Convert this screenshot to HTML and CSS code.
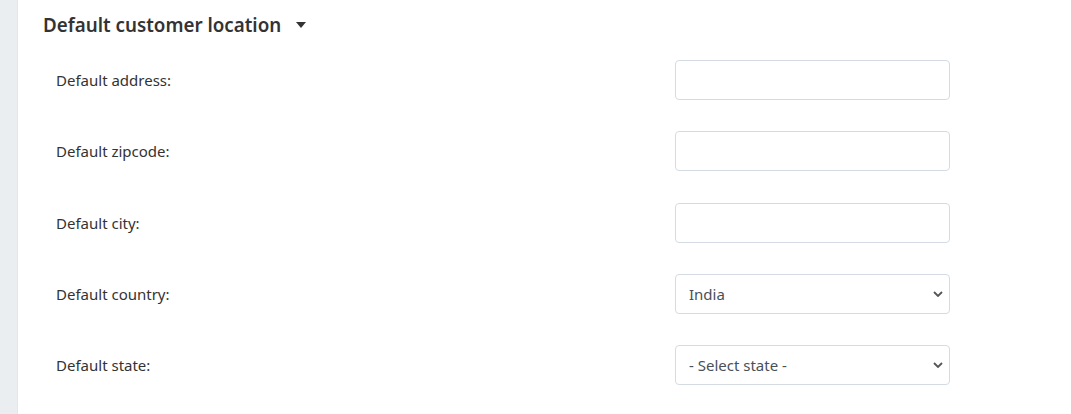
FILE: index.html
```html
<!DOCTYPE html>
<html lang="en">
<head>
  <meta charset="UTF-8" />
  <title>Default customer location</title>
  <link rel="stylesheet" href="styles.css">
</head>
<body>
  <div class="page">
    <div class="sidebar"></div>
    <div class="panel">
      <h2 class="section-title">
        Default customer location
        <svg class="caret" width="10" height="6" viewBox="0 0 10 6"><path d="M0 0h10L5 6z" fill="#333"/></svg>
      </h2>

      <div class="form-grid">
        <label for="address">Default address:</label>
        <input id="address" class="field" type="text">

        <label for="zipcode">Default zipcode:</label>
        <input id="zipcode" class="field" type="text">

        <label for="city">Default city:</label>
        <input id="city" class="field" type="text">

        <label for="country">Default country:</label>
        <select id="country" class="field select">
          <option>India</option>
        </select>

        <label for="state">Default state:</label>
        <select id="state" class="field select">
          <option>- Select state -</option>
        </select>
      </div>
    </div>
  </div>
</body>
</html>
```

FILE: styles.css
```css
* {
  margin: 0;
  padding: 0;
  box-sizing: border-box;
}

body, html {
  width: 100%;
  height: 100%;
  overflow: hidden;
  font-family: 'Noto Sans', 'Open Sans', sans-serif;
  background-color: #fff;
  color: #333;
}

.page {
  display: flex;
  height: 100%;
}

.sidebar {
  width: 18px;
  background-color: #ebeef1;
  border-right: 1px solid #e3e7ec;
}

.panel {
  flex: 1;
  padding: 11px 0 0 25px;
}

.section-title {
  display: flex;
  align-items: center;
  gap: 15px;
  font-size: 18.8px;
  font-weight: 600;
  line-height: 28px;
  color: #333;
}

.form-grid {
  display: grid;
  grid-template-columns: 619px 275px;
  row-gap: 31.25px;
  align-items: center;
  margin-top: 21px;
  padding-left: 13px;
}

.form-grid label {
  font-size: 15px;
  color: #333;
}

.field {
  height: 40px;
  width: 275px;
  border: 1px solid #d5dbe3;
  border-radius: 4px;
  background-color: #fff;
  font-family: inherit;
  font-size: 15px;
  color: #495057;
  padding: 0 13px;
  outline: none;
}

.select {
  appearance: none;
  background-image: url("data:image/svg+xml,%3Csvg xmlns='http://www.w3.org/2000/svg' width='10' height='6' viewBox='0 0 10 6'%3E%3Cpath d='M1 1l4 4 4-4' fill='none' stroke='%23555' stroke-width='1.8'/%3E%3C/svg%3E");
  background-repeat: no-repeat;
  background-position: right 6px center;
}
```
